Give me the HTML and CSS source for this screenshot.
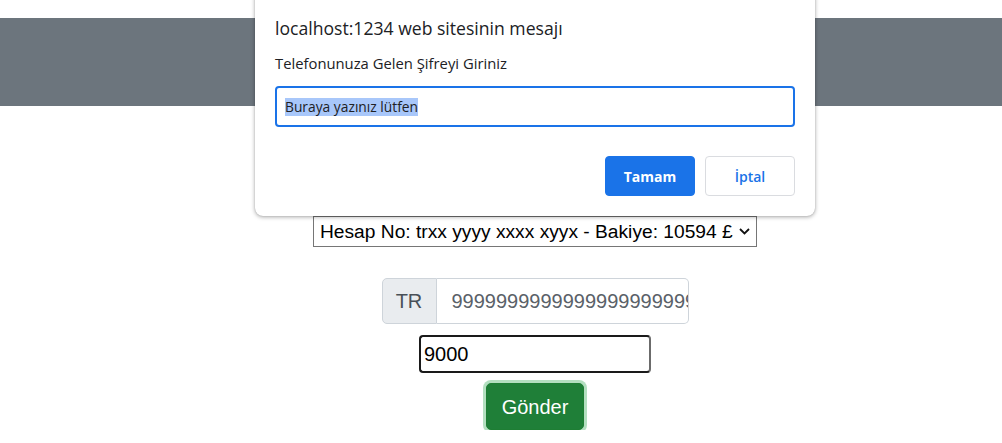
FILE: index.html
```html
<!DOCTYPE html>
<html lang="tr">
<head>
<meta charset="utf-8">
<title>Transfer</title>
<link rel="stylesheet" href="styles.css">
</head>
<body>
<header class="topbar"></header>
<main class="content">
  <div class="select">
    <span class="select-text">Hesap No: trxx yyyy xxxx xyyx - Bakiye: 10594 £</span>
    <svg class="chevron" width="11" height="7" viewBox="0 0 11 7"><path d="M1 1 L5.5 5.5 L10 1" fill="none" stroke="#111" stroke-width="1.8"/></svg>
  </div>
  <div class="input-group">
    <span class="addon">TR</span>
    <input class="iban" type="text" placeholder="99999999999999999999999999">
  </div>
  <input class="amount" type="text" value="9000">
  <button class="send">Gönder</button>
</main>
<div class="dialog">
  <div class="dialog-title">localhost:1234 web sitesinin mesajı</div>
  <div class="dialog-msg">Telefonunuza Gelen Şifreyi Giriniz</div>
  <div class="dialog-input"><span class="sel">Buraya yazınız lütfen</span></div>
  <div class="dialog-actions">
    <button class="btn-ok">Tamam</button>
    <button class="btn-cancel">İptal</button>
  </div>
</div>
</body>
</html>
```
FILE: styles.css
```css
html, body {
  margin: 0;
  padding: 0;
  background: #fff;
  font-family: "Liberation Sans", Arial, sans-serif;
}
.topbar {
  margin-top: 18px;
  height: 88px;
  background: #6c757d;
}
.content {
  display: flex;
  flex-direction: column;
  align-items: center;
  padding-top: 110px;
  padding-left: 68px;
}
.select {
  width: 444px;
  height: 31px;
  box-sizing: border-box;
  border: 1px solid #767676;
  display: flex;
  align-items: center;
  padding: 0 6px 0 6px;
  font-size: 19.2px;
  color: #000;
}
.select-text { flex: 1; white-space: nowrap; overflow: hidden; }
.chevron { margin-left: 4px; flex: none; }
.input-group {
  margin-top: 31px;
  display: flex;
  width: 307px;
  height: 46px;
}
.addon {
  width: 55px;
  box-sizing: border-box;
  display: flex;
  align-items: center;
  justify-content: center;
  background: #e9ecef;
  border: 1px solid #ced4da;
  border-radius: 5px 0 0 5px;
  color: #495057;
  font-size: 20px;
}
.iban {
  flex: 1;
  min-width: 0;
  box-sizing: border-box;
  border: 1px solid #ced4da;
  border-left: 0;
  border-radius: 0 5px 5px 0;
  padding: 0 0 0 15px;
  font-family: inherit;
  font-size: 20px;
  color: #495057;
  outline: none;
}
.iban::placeholder { color: #5a6168; opacity: 1; }
.amount {
  margin-top: 11px;
  width: 232px;
  height: 38px;
  box-sizing: border-box;
  border: 2px solid #1a1a1a;
  border-right-color: #6b6b6b;
  border-radius: 4px;
  padding: 0 3px;
  font-family: inherit;
  font-size: 20px;
  color: #000;
  outline: none;
}
.send {
  margin-top: 10px;
  width: 98px;
  height: 47px;
  border: 1px solid #1e7e34;
  border-radius: 5px;
  background: #1f7f38;
  color: #fff;
  font-family: inherit;
  font-size: 20px;
  line-height: 1;
  padding-top: 2px;
  box-shadow: 0 0 0 3px #b3dfc0;
}
.dialog {
  position: absolute;
  left: 255px;
  top: -10px;
  width: 560px;
  box-sizing: border-box;
  padding: 28px 20px 20px 20px;
  background: #fff;
  border-radius: 8px;
  box-shadow: 0 1px 4px rgba(0,0,0,0.35), 0 0 1px rgba(0,0,0,0.25);
  font-family: "Open Sans", "Noto Sans", sans-serif;
}
.dialog-title {
  font-size: 17.6px;
  line-height: 20px;
  color: #202124;
}
.dialog-msg {
  margin-top: 16px;
  font-size: 14.8px;
  line-height: 18px;
  color: #202124;
}
.dialog-input {
  margin-top: 14px;
  height: 41px;
  box-sizing: border-box;
  border: 2px solid #1a73e8;
  border-radius: 4px;
  display: flex;
  align-items: center;
  padding: 0 8px;
  font-size: 13.8px;
  color: #202124;
}
.sel {
  background: #a8c7fa;
  line-height: 18px;
}
.dialog-actions {
  margin-top: 29px;
  display: flex;
  justify-content: flex-end;
  gap: 10px;
}
.btn-ok, .btn-cancel {
  height: 40px;
  border-radius: 4px;
  font-family: inherit;
  font-size: 14px;
  font-weight: bold;
}
.btn-ok {
  width: 90px;
  background: #1a73e8;
  border: 1px solid #1a73e8;
  color: #fff;
}
.btn-cancel {
  width: 90px;
  background: #fff;
  border: 1px solid #dadce0;
  color: #1a73e8;
  font-weight: 600;
}
```
